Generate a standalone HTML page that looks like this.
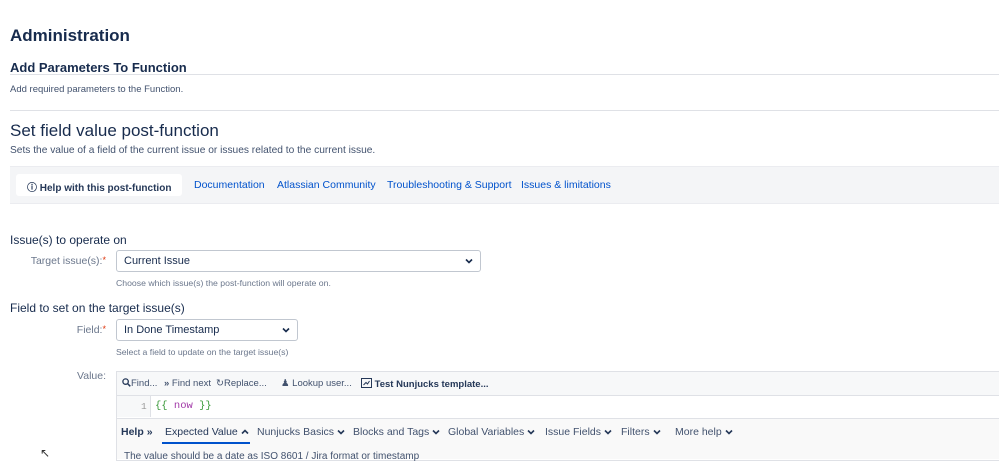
<!DOCTYPE html>
<html><head><meta charset="utf-8"><style>
body{margin:0;width:999px;height:456px;overflow:hidden;background:#fff;font-family:"Liberation Sans",sans-serif;color:#172b4d;position:relative}
.a{position:absolute;white-space:nowrap}
.hr{position:absolute;left:10px;right:0;height:1px;background:#dfe1e6}
.lnk{color:#0052cc;font-size:10.5px}
.lbl{color:#6b778c;font-size:10.5px;text-align:right;width:100px}
.sel{position:absolute;border:1px solid #c1c7d0;border-radius:3px;background:#fff;font-size:11px;box-sizing:border-box;padding:0 7px;display:flex;align-items:center;justify-content:space-between}
.hint{color:#6b778c;font-size:8.7px}
.tb{font-size:9.5px;color:#42526e}
.hb{font-size:10.5px;color:#42526e}
.req{color:#de350b;font-size:9px;vertical-align:top}
.cv{display:inline-block;width:8px;height:6px;margin-left:3px;vertical-align:middle}
</style></head><body>
<div class="a" style="left:10px;top:26px;font-size:17px;font-weight:bold">Administration</div>
<div class="a" style="left:10px;top:60px;font-size:13px;font-weight:bold">Add Parameters To Function</div>
<div class="hr" style="top:74px"></div>
<div class="a" style="left:10px;top:84px;font-size:9.5px;color:#42526e">Add required parameters to the Function.</div>
<div class="hr" style="top:110px"></div>
<div class="a" style="left:10px;top:121px;font-size:17px">Set field value post-function</div>
<div class="a" style="left:10px;top:145px;font-size:10.2px;color:#42526e">Sets the value of a field of the current issue or issues related to the current issue.</div>
<div class="a" style="left:10px;top:166px;width:989px;height:38px;background:#f4f5f7;border-top:1px solid #ebecf0;border-bottom:1px solid #ebecf0;box-sizing:border-box"></div>
<div class="a" style="left:16px;top:174px;width:166px;height:22px;background:#fff;border-radius:3px"></div>
<div class="a" style="left:27px;top:179px;font-size:10px;font-weight:bold;color:#253858">&#9432; Help with this post-function</div>
<div class="a lnk" style="left:194px;top:179px">Documentation</div>
<div class="a lnk" style="left:277px;top:179px">Atlassian Community</div>
<div class="a lnk" style="left:387px;top:179px">Troubleshooting &amp; Support</div>
<div class="a lnk" style="left:521px;top:179px">Issues &amp; limitations</div>
<div class="a" style="left:10px;top:233px;font-size:12px">Issue(s) to operate on</div>
<div class="a lbl" style="left:6px;top:255px">Target issue(s):<span class="req">*</span></div>
<div class="sel" style="left:116px;top:250px;width:365px;height:22px"><span>Current Issue</span><svg class="cv" viewBox="0 0 8 6"><path d="M1 1.5L4 4.5L7 1.5" stroke="#172b4d" stroke-width="1.6" fill="none"/></svg></div>
<div class="a hint" style="left:116px;top:278px">Choose which issue(s) the post-function will operate on.</div>
<div class="a" style="left:10px;top:301px;font-size:12px">Field to set on the target issue(s)</div>
<div class="a lbl" style="left:6px;top:324px">Field:<span class="req">*</span></div>
<div class="sel" style="left:116px;top:319px;width:182px;height:22px"><span>In Done Timestamp</span><svg class="cv" viewBox="0 0 8 6"><path d="M1 1.5L4 4.5L7 1.5" stroke="#172b4d" stroke-width="1.6" fill="none"/></svg></div>
<div class="a hint" style="left:116px;top:347px">Select a field to update on the target issue(s)</div>
<div class="a lbl" style="left:6px;top:370px">Value:</div>
<div class="a" style="left:116px;top:371px;width:883px;height:90px;border:1px solid #dfe1e6;border-right:none;box-sizing:border-box"></div>
<div class="a" style="left:117px;top:372px;width:882px;height:23px;background:#f7f8f9;border-bottom:1px solid #dfe1e6"></div>
<div class="a tb" style="left:122px;top:378px"><svg width="9" height="9" viewBox="0 0 9 9" style="vertical-align:-1px"><circle cx="3.6" cy="3.6" r="2.7" stroke="#253858" stroke-width="1.3" fill="none"/><path d="M5.6 5.6L8.3 8.3" stroke="#253858" stroke-width="1.5"/></svg>Find...</div>
<div class="a tb" style="left:164px;top:378px"><b>&#187;</b> Find next</div>
<div class="a tb" style="left:216px;top:378px">&#x21bb;Replace...</div>
<div class="a tb" style="left:281px;top:378px">&#9823; Lookup user...</div>
<div class="a tb" style="left:361px;top:378px;color:#253858"><svg width="11" height="10" viewBox="0 0 11 10" style="vertical-align:-1px"><rect x="0.5" y="0.5" width="10" height="9" stroke="#253858" fill="none"/><path d="M2.5 7L5 4.5L6.5 6L8.5 3" stroke="#253858" fill="none"/></svg> <b>Test Nunjucks template...</b></div>
<div class="a" style="left:117px;top:396px;width:33px;height:21px;background:#f7f8f9;border-right:1px solid #dfe1e6"></div>
<div class="a" style="left:141px;top:401px;font-family:'Liberation Mono',monospace;font-size:9.5px;color:#999">1</div>
<div class="a" style="left:155px;top:400px;font-family:'Liberation Mono',monospace;font-size:10.5px;color:#3a9a3a">{{ <span style="color:#a23aa8">now</span> }}</div>
<div class="a" style="left:117px;top:418px;width:882px;height:40px;background:#f9f9f9;border-top:1px solid #dfe1e6"></div>
<div class="a hb" style="left:121px;top:426px;color:#253858"><b>Help</b> <b>&#187;</b></div>
<div class="a hb" style="left:165px;top:426px;color:#253858">Expected Value<svg class="cv" viewBox="0 0 8 6"><path d="M1 4.5L4 1.5L7 4.5" stroke="#253858" stroke-width="1.6" fill="none"/></svg></div>
<div class="a" style="left:162px;top:442px;width:88px;height:2px;background:#0052cc"></div>
<div class="a hb" style="left:257px;top:426px">Nunjucks Basics<svg class="cv" viewBox="0 0 8 6"><path d="M1 1.5L4 4.5L7 1.5" stroke="#253858" stroke-width="1.6" fill="none"/></svg></div>
<div class="a hb" style="left:353px;top:426px">Blocks and Tags<svg class="cv" viewBox="0 0 8 6"><path d="M1 1.5L4 4.5L7 1.5" stroke="#253858" stroke-width="1.6" fill="none"/></svg></div>
<div class="a hb" style="left:448px;top:426px">Global Variables<svg class="cv" viewBox="0 0 8 6"><path d="M1 1.5L4 4.5L7 1.5" stroke="#253858" stroke-width="1.6" fill="none"/></svg></div>
<div class="a hb" style="left:545px;top:426px">Issue Fields<svg class="cv" viewBox="0 0 8 6"><path d="M1 1.5L4 4.5L7 1.5" stroke="#253858" stroke-width="1.6" fill="none"/></svg></div>
<div class="a hb" style="left:621px;top:426px">Filters<svg class="cv" viewBox="0 0 8 6"><path d="M1 1.5L4 4.5L7 1.5" stroke="#253858" stroke-width="1.6" fill="none"/></svg></div>
<div class="a hb" style="left:675px;top:426px">More help<svg class="cv" viewBox="0 0 8 6"><path d="M1 1.5L4 4.5L7 1.5" stroke="#253858" stroke-width="1.6" fill="none"/></svg></div>
<div class="a" style="left:124px;top:451px;font-size:10px;color:#42526e">The value should be a date as ISO 8601 / Jira format or timestamp</div>
<div class="a" style="left:40px;top:446px;font-size:12px;color:#333">&#8598;</div>
</body></html>
